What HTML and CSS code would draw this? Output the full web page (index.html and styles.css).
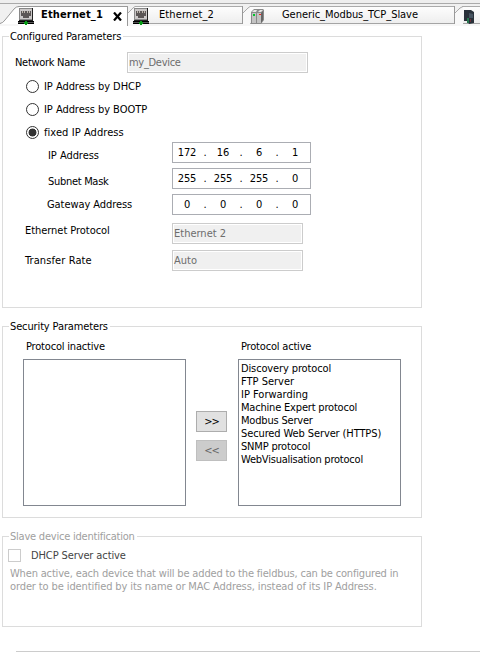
FILE: index.html
```
<!DOCTYPE html>
<html lang="en">
<head>
<meta charset="utf-8">
<title>Ethernet_1</title>
<link rel="stylesheet" href="styles.css">
</head>
<body>
<svg width="0" height="0" class="defs">
  <symbol id="port" viewBox="0 0 16 17">
    <path fill="#888" d="M1 0h13v12H1z"/><path fill="#222" d="M14 0h1v13H1v-1h13z"/><path fill="#cbc8c8" d="M2 1h12v10H2z"/>
    <path fill="#5b5656" d="M3 3h10v5h-2v2H5V8H3z"/>
    <path fill="#bdb6ac" d="M4 3h1v2H4zM6 3h1v2H6zM9 3h1v2H9zM11 3h1v2h-1z"/>
    <path fill="#000" d="M0 13h16v1H0zM0 15h16v1H0z"/><path fill="#555" d="M0 14h16v1H0z"/><path fill="#079b16" d="M7 13h2v1h1v2H9v1H7v-1H6v-2h1z"/>
  </symbol>
</svg>
<nav class="tabs">
  <div class="tab active">
    <svg class="edge" width="19" height="18"><path d="M0 17.5Q3 17 5 14L14 3Q16 .5 19 .5V18H0Z" fill="#fff"/><path d="M0 17.5Q3 17 5 14L14 3Q16 .5 19 .5" fill="none" stroke="#999"/></svg>
    <svg class="icon" width="16" height="17"><use href="#port"/></svg>
    <span class="title t1">Ethernet_1</span>
    <svg class="close" width="9" height="9"><path d="M1 .5 8 8.5M8 .5 1 8.5" stroke="#000" stroke-width="2.2"/></svg>
  </div>
  <div class="tab second">
    <svg class="edge" width="7" height="18"><path d="M0 7L7 1V18H0Z" fill="#f8f8f8"/><path d="M0 7L5 2L7 .5" fill="none" stroke="#aaa"/></svg>
    <svg class="icon" width="16" height="17"><use href="#port"/></svg>
    <span class="title t2">Ethernet_2</span>
  </div>
  <div class="tab third">
    <svg class="edge" width="7" height="18"><path d="M0 7L7 1V18H0Z" fill="#f8f8f8"/><path d="M0 7L5 2L7 .5" fill="none" stroke="#aaa"/></svg>
    <svg class="icon server" width="13" height="15"><path d="M0 3 3 0h9l1 1v10l-3 4H0z" fill="#8a8a8a"/><path d="M1 3 3 1h3L5 3zM7 3l2-2h3l-2 2z" fill="#e5e5e5"/><path d="M1 4h4v10H1zM6 4h4v10H6z" fill="#c3c3c3"/><path d="M10 4l2-2v9l-2 3z" fill="#666"/><path d="M2 5h2v2H2z" fill="#00c52b"/><path d="M8 5h2v1H8z" fill="#e22"/></svg>
    <span class="title t3">Generic_Modbus_TCP_Slave</span>
  </div>
  <div class="tab fourth">
    <svg class="edge" width="8" height="18"><path d="M0 7L8 1V18H0Z" fill="#f8f8f8"/><path d="M0 7L5 2L8 .5" fill="none" stroke="#aaa"/></svg>
    <svg class="icon drive" width="10" height="14"><path d="M0 0h7l3 2v11l-5 1-2-3H0z" fill="#29313a"/><path d="M5 3l4 1v4H5z" fill="#465360"/><path d="M3 8h2v5H3z" fill="#287750"/><path d="M6 9h1v3H6z" fill="#6a3038"/></svg>
  </div>
</nav>
<main>
  <fieldset class="configured">
    <legend><span class="l1">Configured Parameters</span></legend>
    <div class="name-row"><label class="nn">Network Name</label><div class="readonly wide"><span class="dev">my_Device</span></div></div>
    <div class="radios">
      <div class="radio"><i></i><span class="r1">IP Address by DHCP</span></div>
      <div class="radio"><i></i><span class="r2">IP Address by BOOTP</span></div>
      <div class="radio on"><i></i><span class="r3">fixed IP Address</span></div>
    </div>
    <div class="addresses">
      <div class="address"><label class="low a1">IP Address</label><div class="ip"><b>172</b><i>.</i><b>16</b><i>.</i><b>6</b><i>.</i><b>1</b></div></div>
      <div class="address"><label class="low a2">Subnet Mask</label><div class="ip"><b>255</b><i>.</i><b>255</b><i>.</i><b>255</b><i>.</i><b>0</b></div></div>
      <div class="address"><label class="gateway a3">Gateway Address</label><div class="ip"><b>0</b><i>.</i><b>0</b><i>.</i><b>0</b><i>.</i><b>0</b></div></div>
    </div>
    <div class="settings">
      <div class="setting protocol"><label class="s1">Ethernet Protocol</label><div class="readonly"><span class="eth">Ethernet 2</span></div></div>
      <div class="setting"><label class="s2">Transfer Rate</label><div class="readonly"><span class="auto">Auto</span></div></div>
    </div>
  </fieldset>
  <fieldset class="security">
    <legend><span class="l2">Security Parameters</span></legend>
    <div class="transfer">
      <div class="column"><label class="p1">Protocol inactive</label><div class="list"></div></div>
      <div class="buttons"><button>&gt;&gt;</button><button disabled>&lt;&lt;</button></div>
      <div class="column"><label class="p2">Protocol active</label>
        <ul class="list"><li class="i1">Discovery protocol</li><li class="i2">FTP Server</li><li class="i3">IP Forwarding</li><li class="i4">Machine Expert protocol</li><li class="i5">Modbus Server</li><li class="i6">Secured Web Server (HTTPS)</li><li class="i7">SNMP protocol</li><li class="i8">WebVisualisation protocol</li></ul>
      </div>
    </div>
  </fieldset>
  <fieldset class="slave">
    <legend><span class="l3">Slave device identification</span></legend>
    <div class="check"><i></i><span class="c1">DHCP Server active</span></div>
    <p><span class="d1">When active, each device that will be added to the fieldbus, can be configured in</span><br><span class="d2">order to be identified by its name or MAC Address, instead of its IP Address.</span></p>
  </fieldset>
</main>
<footer></footer>
</body>
</html>
```

FILE: styles.css
```
* { box-sizing: border-box; }
body { margin: 0; width: 480px; height: 652px; overflow: hidden; background: #fff; color: #000; font: 11px/13px "DejaVu Sans Condensed", "DejaVu Sans", sans-serif; font-stretch: condensed; letter-spacing: -0.3px; display: flex; flex-direction: column; }
.defs { position: absolute; }
svg { display: block; flex: none; }
span, label, li { white-space: nowrap; }
.tabs { height: 26px; flex: none; display: flex; padding-top: 6px; background: linear-gradient(#eee 3px, #aaa 3px 4px, #f0f0f0 4px 23px, #a5a5a5 23px 24px, #f7f7f7 24px); }
.tab { height: 18px; display: flex; flex: none; border-right: 1px solid #999; position: relative; }
.active { width: 128px; height: 20px; background: linear-gradient(#999 1px, #fff 1px) 18px 0 no-repeat; }
.second, .third, .fourth { background: linear-gradient(#aaa 1px, #fdfdfd 1px, #eee 17px, #a5a5a5 17px) 7px 0 no-repeat; }
.second { width: 115px; }
.third { width: 212px; }
.fourth { width: 30px; border: 0; }
.icon { margin-top: 2px; }
.active .icon { margin-left: -1px; }
.second .icon { margin-left: -2px; }
.server { margin: 3px 0 0 1px; }
.drive { margin: 4px 0 0 1px; }
.title { line-height: 18px; }
.active .title { font-weight: bold; margin-left: 7px; width: 64px; }
.active .close { margin: 6px 0 0 8px; }
.second .title { margin-left: 10px; }
.third .title { margin-left: 18px; }
main { width: 420px; margin: 4px 0 0 2px; }
fieldset { margin: 0; padding: 0; border: 1px solid #dcdcdc; min-width: 0; }
legend { margin-left: 6px; padding: 0 2px 0 1px; height: 13px; }
.configured { height: 278px; }
.name-row { display: flex; align-items: center; margin: 9px 0 0 12px; }
.name-row label { width: 112px; }
.readonly { width: 131px; height: 21px; border: 1px solid #ccc; padding: 1px; line-height: 17px; color: #6d6d6d; background: #f0f0f0; box-shadow: inset 0 0 0 1px #fff; }
.wide { width: 181px; line-height: 18px; }
.radios { display: flex; flex-direction: column; gap: 4px; margin: 4px 0 0 23px; }
.radio { height: 19px; display: flex; align-items: center; gap: 5px; }
.radio i { width: 13px; height: 13px; border: 1px solid #333; border-radius: 50%; }
.on i { background: radial-gradient(circle, #333 3.6px, #fff 4.3px); }
.addresses { display: flex; flex-direction: column; gap: 5px; }
.address { display: flex; height: 21px; }
.address label { width: 124px; margin-left: 45px; padding-top: 7px; }
.address .gateway { width: 125px; margin-left: 44px; padding-top: 4px; }
.ip { width: 139px; height: 21px; border: 1px solid #abadb3; display: grid; grid-template-columns: 28px 8px 28px 8px 28px 8px 28px; text-align: center; line-height: 19px; }
.ip b, .ip i { font-weight: normal; font-style: normal; }
.settings { margin: 8px 0 0 22px; display: flex; flex-direction: column; gap: 6px; }
.setting { display: flex; }
.setting label { width: 147px; padding-top: 4px; }
.protocol label { padding-top: 1px; }
.security { height: 198px; margin-top: 12px; }
.transfer { display: flex; margin: 7px 0 0 20px; }
.column { display: flex; flex-direction: column; gap: 6px; }
.column label { padding-left: 3px; }
.list { width: 163px; height: 147px; border: 1px solid #828790; margin: 0; padding: 2px; list-style: none; }
.buttons { display: flex; flex-direction: column; gap: 8px; margin: 71px 11px 0 10px; }
button { width: 31px; height: 21px; padding: 0; border: 1px solid #adadad; background: #e1e1e1; font: inherit; letter-spacing: -1px; color: #000; line-height: 18px; }
button:disabled { background: #ccc; border-color: #bfbfbf; color: #666; }
.slave { height: 97px; margin-top: 12px; color: #a0a0a0; }
.check { display: flex; align-items: center; gap: 10px; margin: 6px 0 0 5px; height: 13px; color: #444; }
.check i { width: 13px; height: 13px; border: 1px solid #ccc; }
p { margin: 5px 0 0 7px; }
footer { height: 1px; margin: auto 0 0 16px; background: #ccc; }

/* Per-label tracking */
.t1 { letter-spacing: 0.15px; }
.t2, .s2 { letter-spacing: 0.1px; }
.t3, .r1, .r2, .a1, .s1 { letter-spacing: -0.05px; }
.r3 { letter-spacing: 0.07px; }
.a3 { letter-spacing: -0.07px; }
.l1, .l2, .i1 { letter-spacing: -0.13px; }
.eth, .auto, .i2, .i3 { letter-spacing: 0; }
.i4, .i5, .i7, .p1, .p2 { letter-spacing: -0.19px; }
.i8, .l3 { letter-spacing: -0.22px; }
.i6, .c1, .d2 { letter-spacing: -0.11px; }
.d1 { letter-spacing: -0.17px; }
.ip { letter-spacing: -0.1px; }
```
